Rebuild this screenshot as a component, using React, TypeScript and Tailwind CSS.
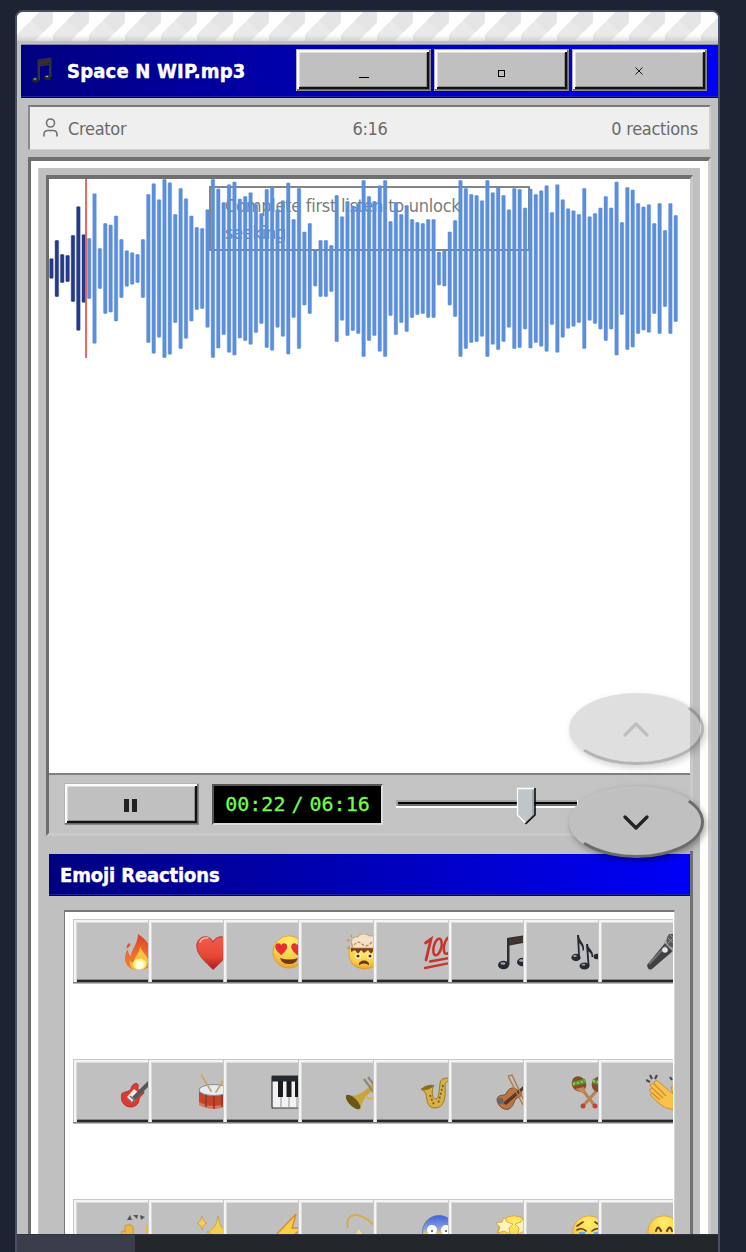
import React from "react";

const CENTER = 89.5;
const barHalf: number[] = [
  30, 85, 43, 40, 100, 186, 102, 91, 225, 61, 136, 131, 158, 88, 54, 48, 43, 88, 223, 255, 207, 268, 258, 163, 241, 210,
  158, 124, 121, 177, 268, 239, 199, 252, 260, 209, 217, 228, 193, 166, 238, 246, 177, 204, 257, 148, 241, 110, 136, 53,
  85, 85, 70, 220, 156, 202, 187, 196, 265, 217, 202, 249, 265, 142, 199, 163, 190, 148, 139, 136, 148, 148, 50, 53, 110,
  145, 265, 241, 223, 220, 204, 265, 228, 244, 220, 177, 241, 238, 182, 239, 223, 234, 249, 169, 252, 207, 180, 174, 163,
  241, 156, 166, 182, 217, 182, 260, 139, 244, 236, 196, 185, 192, 136, 196, 115, 196, 160,
];

function Waveform() {
  return (
    <svg width="640" height="180" viewBox="0 0 640 180" className="block">
      {barHalf.map((h, i) => (
        <g key={i}>
          <rect
            x={0.1 + i * 5.382}
            y={CENTER - h / 3}
            width={4.7}
            height={(h * 2) / 3}
            rx={1}
            fill={i < 7 ? "#253a86" : "#5b8edb"}
            opacity={0.35}
          />
          <rect
            x={0.7 + i * 5.382}
            y={CENTER - h / 3}
            width={3.5}
            height={(h * 2) / 3}
            rx={1}
            fill={i < 7 ? "#253a86" : "#5b8edb"}
          />
        </g>
      ))}
      <rect x="36.1" y="0" width="1.8" height="179" fill="#ea5a4f" />
    </svg>
  );
}

const Face = ({ children }: { children?: React.ReactNode }) => (
  <>
    <circle cx="18" cy="18" r="16.2" fill="url(#face)" stroke="#d9962a" strokeWidth=".7" />
    {children}
  </>
);
const heart = "M18 33C12 27 3 20 3 11.500C3 6 7 3 11 3C14 3 17 5 18 8C19 5 22 3 25 3C29 3 33 6 33 11.500C33 20 24 27 18 33Z";

const emojis: { name: string; art: React.ReactNode }[] = [
  {
    name: "fire",
    art: (
      <>
        <path d="M17 0C23 4 29 9 31 20C33 31 27 36 18 36C9 36 3.500 31 4 23C4.500 20 5 18 7 15.500C7 19 8 21 10 22C10 16 17 10 17 0Z" fill="url(#fire)" />
        <path d="M8 9C10 10 10 12 5.500 14.500C5.500 12 6 11 8 9Z" fill="#e2502d" />
        <path d="M19 12C21 19 28 22 27 29C26 34 22 36 18 36C11 36 8 32 9 26C10 29 12 29 13 28C13 23 19 19 19 12Z" fill="#fbc23f" />
        <ellipse cx="18.500" cy="30" rx="6.500" ry="5.500" fill="#fff58f" />
        <ellipse cx="18.500" cy="31" rx="4" ry="4" fill="#fffde0" />
      </>
    ),
  },
  {
    name: "heart",
    art: (
      <>
        <path d={heart} transform="translate(-2.5 -.5) scale(1.09)" fill="url(#heart)" stroke="#ad251f" strokeWidth=".7" />
        <path d="M4 8C5 5 8 3.500 12 4" stroke="#ffb0a5" strokeWidth="1.500" fill="none" strokeLinecap="round" />
      </>
    ),
  },
  {
    name: "heart eyes",
    art: (
      <Face>
        <path d={heart} transform="translate(3 8) scale(.4)" fill="#e43232" />
        <path d={heart} transform="translate(19 8) scale(.4)" fill="#e43232" />
        <path d="M9 24Q18 27 27 24Q25 30 18 30Q11 30 9 24Z" fill="#6b3a14" />
      </Face>
    ),
  },
  {
    name: "mind blown",
    art: (
      <>
        <path d="M3 15Q18 11 33 15Q35 35 18 35Q1 34 3 15Z" fill="url(#face)" stroke="#d9962a" strokeWidth=".7" />
        <path d="M5 14H31L32 17L28 16L25 20L22 16L18 19L15 16L12 20L9 16L5 18Z" fill="#833d20" />
        <path d="M6 10C4 6 8 2 12 3C14-1 20-1 23 2C28 1 33 5 31 10L29 14H7Z" fill="#f4e3c8" stroke="#b78b58" strokeWidth=".7" />
        <path d="M8 11Q12 6 16 10T25 9T30 11" stroke="#b98855" strokeWidth="1.300" fill="none" strokeDasharray="3 1.500" />
        <path d="M0 6L4 5L3 8ZM0 14L4 12L4 16ZM4 2L6 0L6 4Z" fill="#d99b34" />
        <circle cx="12" cy="22" r="2.800" fill="#fff8da" /><circle cx="24" cy="22" r="2.800" fill="#fff8da" />
        <circle cx="12" cy="22" r="1.600" fill="#5b3014" /><circle cx="24" cy="22" r="1.600" fill="#5b3014" />
        <path d="M13 31C12 25 24 25 23 31Q18 28 13 31Z" fill="#6b3a14" />
      </>
    ),
  },
  {
    name: "hundred",
    art: (
      <g fill="none" stroke="#c6352c" strokeLinecap="round">
        <path d="M4.500 9L10 5L5 26" strokeWidth="2.800" />
        <ellipse cx="16.500" cy="13" rx="3.800" ry="8.500" strokeWidth="2.500" transform="rotate(14 16.500 13)" />
        <ellipse cx="27" cy="11.500" rx="3.800" ry="8.500" strokeWidth="2.500" transform="rotate(14 27 11.500)" />
        <path d="M9 27.500L31 23.500M4 34L31 28.500" strokeWidth="2.300" />
      </g>
    ),
  },
  {
    name: "beamed notes",
    art: (
      <g>
        <path d="M11 4L33 .5V27H30.500V8.500L13.500 11.500V31H11Z" fill="#2f2e33" />
        <path d="M13 5L31 2V7L13 10Z" fill="#473331" />
        <ellipse cx="7.500" cy="31" rx="5.500" ry="4.300" fill="#25292f" /><ellipse cx="26.500" cy="28" rx="5.500" ry="4.300" fill="#25292f" />
        <ellipse cx="7" cy="29.500" rx="2.500" ry="1.200" fill="#9fa6b0" /><ellipse cx="25.500" cy="26.500" rx="2.500" ry="1.200" fill="#9fa6b0" />
      </g>
    ),
  },
  {
    name: "notes",
    art: (
      <g fill="#252a32">
        <path d="M6 1L8 1C8 7 14 9 13 16L11.500 17C12 12 9 10 8.300 9L9 24H7.300Z" />
        <ellipse cx="5" cy="23.500" rx="4.600" ry="3.700" />
        <path d="M15 10L17 10C17 15 23 16 22 23L20.500 23C21 19 18 18 17.500 17.500L18.500 32H16.700Z" />
        <ellipse cx="13.500" cy="32" rx="5" ry="3.500" />
        <path d="M27 6L29 6C29 11 34 13 33 19L31 19L29 14V23H28Z" /><ellipse cx="26" cy="22.500" rx="3.500" ry="2.700" />
        <ellipse cx="4" cy="22" rx="1.800" ry=".9" fill="#9ba6b5" /><ellipse cx="12.500" cy="30.700" rx="1.800" ry=".9" fill="#9ba6b5" />
      </g>
    ),
  },
  {
    name: "microphone",
    art: (
      <g>
        <path d="M1 31L19 9L27 17L6 35Q2 37 1 31Z" fill="#414144" />
        <path d="M3 30L20 12" stroke="#727276" strokeWidth="2" />
        <path d="M18 8L23 3L33 12L27 18Z" fill="#a2a2a5" />
        <circle cx="28" cy="6" r="7.500" fill="#57585c" />
        <path d="M22 4L31 12M24 1L34 9M22 9L32 0" stroke="#9a9b9e" />
        <circle cx="19" cy="16" r="2.800" fill="#e4e4e4" />
      </g>
    ),
  },
  {
    name: "guitar",
    art: (
      <g>
        <path d="M0 22C0 17 7 19 10 15C11 8 19 8 17 13C16 18 22 15 23 18C23 21 19 21 18 26C17 36 0 36 0 22Z" fill="#dc3a32" stroke="#a71f22" strokeWidth=".7" />
        <path d="M6 23L13 15L18 19L11 28Z" fill="#f2efea" />
        <path d="M11 23L32 2L35 5L14 26Z" fill="#57585b" />
        <path d="M7 25L11 29M9 22L14 27" stroke="#777" strokeWidth="1.500" />
      </g>
    ),
  },
  {
    name: "drum",
    art: (
      <g>
        <path d="M3 14V30Q18 38 33 30V14Z" fill="#c84329" />
        <path d="M3 28Q18 36 33 28V31Q18 39 3 31Z" fill="#e0715a" />
        <path d="M10 19V33M18 20V35M26 19V33" stroke="#7c3a34" strokeWidth="1.400" />
        <ellipse cx="18" cy="16" rx="15" ry="5.500" fill="#e6edf1" stroke="#7c8b94" />
        <path d="M6 2L15 17M29 4L20 18" stroke="#c9a566" strokeWidth="1.800" strokeLinecap="round" />
        <circle cx="6" cy="2" r="1.700" fill="#d3b071" />
      </g>
    ),
  },
  {
    name: "piano",
    art: (
      <g>
        <rect x="1" y="2" width="34" height="32" rx="1" fill="#f2f2f3" stroke="#33363a" strokeWidth="1.200" />
        <rect x="1" y="2" width="34" height="5.500" fill="#24292e" />
        <path d="M10 7V34M18 7V34M26 7V34" stroke="#929497" />
        <path d="M7 7H12V23H7ZM15.500 7H20.500V23H15.500ZM24 7H29V23H24Z" fill="#191b1e" />
      </g>
    ),
  },
  {
    name: "trumpet",
    art: (
      <g>
        <path d="M0 21C8 23 14 21 22 14L34 2L36 5L26 17C19 22 15 29 15 35C7 35 0 29 0 21Z" fill="#c7a53a" />
        <ellipse cx="7" cy="28" rx="4" ry="9.500" transform="rotate(-45 7 28)" fill="#6b5519" />
        <path d="M18 5L31 23M22 3L34 19" stroke="#8f8a73" strokeWidth="2.200" />
        <path d="M19 22C26 29 34 20 28 13" fill="none" stroke="#d3b54b" strokeWidth="2" />
      </g>
    ),
  },
  {
    name: "saxophone",
    art: (
      <g>
        <path d="M0 15L13 11C10 17 11 25 15 25C18 25 18 16 19 10C19 4 24 4 31 4V6C26 7 24 8 24 12C25 24 23 34 14 34C4 34 7 23 4 18Z" fill="#d8b044" stroke="#8b6b1c" strokeWidth=".8" />
        <ellipse cx="6.500" cy="13.500" rx="6" ry="2" transform="rotate(-18 6.500 13.500)" fill="#8d6d20" />
        <path d="M22 11L17 30M9 21L13 31" stroke="#76601f" strokeWidth="1.800" strokeDasharray="2 2" />
      </g>
    ),
  },
  {
    name: "violin",
    art: (
      <g>
        <path d="M1 25C2 20 8 22 10 20C12 14 18 12 21 16C27 16 27 23 21 24C18 26 18 32 13 35C7 37 1 31 1 25Z" fill="#bc7340" stroke="#6d3b1f" strokeWidth=".8" />
        <path d="M7 29L32 8L34 10L10 31Z" fill="#55392a" />
        <path d="M12 2L27 31M12 2L16 1L29 29" fill="none" stroke="#b67a46" strokeWidth="1.400" />
        <circle cx="4.500" cy="27" r="3" fill="#666" />
      </g>
    ),
  },
  {
    name: "maracas",
    art: (
      <g>
        <path d="M10 14L24 32M28 14L12 32" stroke="#b98252" strokeWidth="3" />
        <ellipse cx="8" cy="10" rx="7" ry="8" transform="rotate(-30 8 10)" fill="#8a4a27" />
        <path d="M4 15L13 13L15 18L11 19Z" fill="#c08a58" />
        <ellipse cx="28" cy="10" rx="7" ry="8" transform="rotate(30 28 10)" fill="#8a4a27" />
        <path d="M1.500 10L14.500 7M21.500 7L34 10" stroke="#4f9a35" strokeWidth="4.500" />
        <path d="M2 10L14 7M22 7L34 10" stroke="#e7c64b" strokeWidth="1.300" strokeDasharray="2 2" />
        <circle cx="12" cy="32" r="2.500" fill="#c14431" /><circle cx="24" cy="32" r="2.500" fill="#c14431" />
      </g>
    ),
  },
  {
    name: "clap",
    art: (
      <g>
        <path d="M3 16L6 14L4 11Q6 8 9 11L8 8Q11 5 14 9L27 20L25 13Q28 11 30 15L35 27Q35 37 25 35Q19 35 14 30L5 22Q3 20 6 19Z" fill="#f8c34d" stroke="#c78325" strokeWidth=".8" />
        <path d="M6 14L17 24M9 11L20 22M6 19L14 26" stroke="#cf8c2a" strokeWidth="1.200" />
        <path d="M0 6L4 8M4 1L6 5M11 1L9 5M24 3L26 6M30 1L28 6" stroke="#4c4c4c" strokeWidth="2.200" />
      </g>
    ),
  },
  {
    name: "raised hands",
    art: (
      <g>
        <path d="M0 18Q2 15 4 18V12Q6 9 7 12Q9 8 10 12Q13 11 12 16V22L15 20V36H3Z" fill="#eeb743" stroke="#bd8525" strokeWidth=".7" />
        <path d="M35 18Q33 15 31 18V12Q29 9 28 12Q26 8 25 12V36H32Z" fill="#eeb743" />
        <path d="M6 6L9 1L11 6ZM12 1L17 1L16 5ZM19 1L24 3L20 6Z" fill="#555" />
      </g>
    ),
  },
  {
    name: "sparkles",
    art: (
      <path d="M6 2Q7 8 11 9Q7 10 6 16Q5 10 1 9Q5 8 6 2ZM22 2Q24 16 33 18Q24 20 22 35Q20 20 11 18Q20 16 22 2Z" fill="#f5cf54" stroke="#d29b38" strokeWidth=".8" />
    ),
  },
  { name: "lightning", art: <path d="M25 0L5 21H15L6 36L31 14H21Z" fill="#fbcf4c" stroke="#dd8c27" strokeWidth="1.500" /> },
  {
    name: "dizzy",
    art: (
      <>
        <path d="M2 14C-2-4 17-3 31 15" fill="none" stroke="#d7ab4d" strokeWidth="2" />
        <path d="M13 15L16 20L22 20L18 25L20 33L13 29L6 33L8 25L4 20L10 20Z" fill="#f8dd85" />
      </>
    ),
  },
  {
    name: "scream",
    art: (
      <>
        <circle cx="18" cy="18" r="16.500" fill="url(#scream)" stroke="#4765bd" strokeWidth=".7" />
        <circle cx="11" cy="16" r="5" fill="#fff" /><circle cx="25" cy="16" r="5" fill="#fff" />
        <circle cx="11" cy="17" r="1" fill="#444" /><circle cx="25" cy="17" r="1" fill="#444" />
        <ellipse cx="18" cy="27" rx="4" ry="6" fill="#5b3014" />
      </>
    ),
  },
  {
    name: "star struck",
    art: (
      <Face>
        <path d="M8 3L11 8L17 10L13 14L14 20L8 17L2 19L4 13L0 9L6 8Z" fill="#fff3b8" stroke="#cf9332" strokeWidth=".7" />
        <path d="M28 3L30 8L36 9L32 14L33 20L28 17L22 20L23 14L19 10L25 8Z" fill="#fff3b8" stroke="#cf9332" strokeWidth=".7" />
        <path d="M10 24H27Q24 31 18 31Q12 31 10 24Z" fill="#5b3014" />
      </Face>
    ),
  },
  {
    name: "crying",
    art: (
      <Face>
        <path d="M6 12L12 8M24 8L30 12M6 16Q11 13 15 17M21 17Q26 13 30 16" fill="none" stroke="#67401b" strokeWidth="1.600" strokeLinecap="round" />
        <path d="M8 18H14V30H8ZM23 18H29V30H23Z" fill="#65a9ef" />
        <path d="M13 26Q18 20 23 26V31H13Z" fill="#6b3a14" />
      </Face>
    ),
  },
  {
    name: "smile",
    art: (
      <Face>
        <path d="M10 17Q12 10 15 17M21 17Q24 10 26 17" fill="none" stroke="#67401b" strokeWidth="2" strokeLinecap="round" />
        <path d="M9 23Q18 29 27 23" fill="none" stroke="#67401b" strokeWidth="2" />
      </Face>
    ),
  },
];

function Gradients() {
  return (
    <svg width="0" height="0" className="absolute">
      <defs>
        <radialGradient id="face" cx=".5" cy=".2" r=".9">
          <stop offset="0" stopColor="#fff06c" /><stop offset=".6" stopColor="#f8cb45" /><stop offset="1" stopColor="#e48f2b" />
        </radialGradient>
        <linearGradient id="fire" x2="0" y2="1">
          <stop offset="0" stopColor="#d94125" /><stop offset=".6" stopColor="#f0702f" /><stop offset="1" stopColor="#ef7c2c" />
        </linearGradient>
        <linearGradient id="heart" x2="0" y2="1">
          <stop offset="0" stopColor="#ef5c4c" /><stop offset=".6" stopColor="#e94734" /><stop offset="1" stopColor="#a51e25" />
        </linearGradient>
        <linearGradient id="scream" x2="0" y2="1">
          <stop offset="0" stopColor="#3f62db" /><stop offset=".4" stopColor="#8ba5e0" /><stop offset=".55" stopColor="#f4cd49" />
        </linearGradient>
      </defs>
    </svg>
  );
}

function BevelButton({ label, children }: { label: string; children: React.ReactNode }) {
  return (
    <button
      aria-label={label}
      className="flex h-[42px] w-[135px] shrink-0 items-center justify-center bg-[#c0c0c0] shadow-[inset_1px_1px_#b4b4b8,inset_-1px_-1px_#888,inset_-2px_-2px_#666,inset_3px_3px_#fbfbfb,inset_-4px_-4px_#111,inset_4px_4px_#dcdcdc,inset_-5px_-5px_#929292]"
    >
      {children}
    </button>
  );
}

function OvalButton({ up }: { up?: boolean }) {
  return (
    <button
      className={
        "flex h-[72px] w-[135px] items-center justify-center rounded-[50%] border-[3px] border-t-[#c1c1c1] border-l-[#c1c1c1] border-r-[#6b6b6b] border-b-[#6b6b6b] bg-[#c0c0c0] shadow-[2px_3px_6px_rgba(0,0,0,0.35)] " +
        (up ? "opacity-50" : "")
      }
    >
      <svg width="28" height="18" viewBox="0 0 28 18" fill="none" stroke={up ? "#808080" : "#222"} strokeWidth="3.300" strokeLinecap="round" strokeLinejoin="round" className="-ml-px">
        <path d={up ? "M3 15L14 4L25 15" : "M3 4L14 15L25 4"} />
      </svg>
    </button>
  );
}

export default function App() {
  return (
    <div className="relative h-[1252px] w-[746px] overflow-hidden bg-[#1e2333] pt-[10px] pl-[15px] font-['DejaVu_Sans_Condensed','DejaVu_Sans',sans-serif] [font-stretch:condensed]">
      <Gradients />
      <div className="flex h-[1242px] w-[705px] flex-col overflow-hidden rounded-t-lg border-x-2 border-t-2 border-[#4a5064] bg-[#c0c0c0]">
        <svg width="701" height="29" className="block shrink-0">
          <defs>
            <pattern id="stripes" width="36" height="29" patternUnits="userSpaceOnUse">
              <rect width="36" height="29" fill="#fff" />
              <path d="M22.500 0H36V10.500L17.500 29H0V22.500Z" fill="#e9e9e9" />
              <path d="M14 8.500L26.500 20L36 10.500V0H22.500ZM0 22.500L7 29H0Z" fill="#e5e5e5" />
            </pattern>
            <linearGradient id="stripEdge" x2="0" y2="1">
              <stop offset=".8" stopColor="#bbb" stopOpacity="0" /><stop offset="1" stopColor="#bbb" stopOpacity=".5" />
            </linearGradient>
          </defs>
          <rect width="701" height="29" fill="url(#stripes)" />
          <rect width="701" height="29" fill="url(#stripEdge)" />
        </svg>

        <header className="mt-[3px] ml-1 flex h-[54px] shrink-0 items-start border-t border-[#8585ad] bg-linear-to-r from-[#000080] to-[#0000f8] pl-[10px] shadow-[inset_0_-1px_#00006a,inset_0_-2px_#2222a0]">
          <svg width="22" height="27" viewBox="0 0 22 27" className="mt-[12px] shrink-0">
            <path d="M7 3L20 1V20H18.500V7.500L8.500 9V23H7Z" fill="#24242b" stroke="#55555c" strokeWidth=".5" />
            <path d="M8 4L19 2V6L8 8Z" fill="#3c2d2d" />
            <ellipse cx="4.500" cy="23" rx="3.500" ry="2.700" fill="#20242a" /><ellipse cx="16.500" cy="20.500" rx="3.500" ry="2.700" fill="#20242a" />
            <ellipse cx="4" cy="22" rx="1.500" ry=".8" fill="#a7adb9" /><ellipse cx="16" cy="19.500" rx="1.500" ry=".8" fill="#a7adb9" />
          </svg>
          <h1 className="mt-[13px] ml-[14px] w-[229px] shrink-0 text-[20px] leading-[26px] font-bold tracking-[0.2px] whitespace-nowrap text-white [-webkit-text-stroke:0.4px_white]">Space N WIP.mp3</h1>
          <div className="mt-1 flex gap-[3px]">
            <BevelButton label="Minimize">
              <span className="mt-[14px] block h-px w-[10px] bg-black" />
            </BevelButton>
            <BevelButton label="Maximize">
              <span className="mt-[6px] block h-[7px] w-[7px] border border-black" />
            </BevelButton>
            <BevelButton label="Close">
              <svg width="8" height="8" viewBox="0 0 8 8" className="mt-[2px] -ml-[2px]"><path d="M.5 .5L7.500 7.500M7.500 .5L.5 7.500" stroke="#000" strokeWidth=".9" /></svg>
            </BevelButton>
          </div>
        </header>

        <div className="mt-[7px] ml-[11px] flex h-[45px] w-[683px] shrink-0 items-center justify-between border-t-2 border-r-2 border-b border-l-2 border-t-[#7a7a7a] border-r-[#d0d0d0] border-b-[#d0d0d0] border-l-[#8a8a8a] bg-[#efefef] pr-[11px] pl-[12px] text-[18px] tracking-[-0.3px] text-[#6a6a6a]">
          <span className="flex w-[116px] items-center gap-[9px]">
            <svg width="17" height="20" viewBox="0 0 17 20" fill="none" stroke="#707070" strokeWidth="1.600" strokeLinecap="round"><circle cx="8.500" cy="5" r="4" /><path d="M2 18V16.500Q2 12.500 6 12.500H11Q15 12.500 15 16.500V18" /></svg>
            Creator
          </span>
          <span>6:16</span>
          <span className="w-[116px] text-right">0 reactions</span>
        </div>

        <div className="mt-[7px] ml-[11px] flex min-h-0 w-[683px] grow flex-col overflow-hidden border-t-4 border-r-[3px] border-l-[3px] border-t-[#707070] border-r-[#cdcdcd] border-l-[#6d6d6d] bg-white px-[7px] pt-[7px]">
          <div className="flex w-[662px] grow flex-col bg-[#c0c0c0] pt-[7px] pl-[8px] shadow-[inset_1px_0_#d0d0d0]">
            <section className="flex h-[661px] w-[647px] shrink-0 flex-col border-[3px] border-t-[4px] border-t-[#707070] border-r-[#cacaca] border-b-[#cacaca] border-l-[#6d6d6d]">
              <div className="relative h-[594px] w-[641px] shrink-0 bg-white">
                <div className="absolute top-[7px] left-[160px] h-[65px] w-[321px] border-2 border-[#858585] px-[14px] pt-[4px] text-[18px] leading-[27px] tracking-[-0.27px] text-[#7c7c7c]">
                  Complete first listen to unlock<br />seeking
                </div>
                <div className="relative"><Waveform /></div>
              </div>
              <div className="flex h-[60px] items-start border-t-2 border-t-[#808080] bg-[#c3c3c3] pt-[8px] pl-[15px]">
                <BevelButton label="Pause">
                  <svg width="14" height="13" className="mt-[2px] -ml-[2px]"><path d="M0 0H5V13H0ZM8 0H13V13H8Z" fill="#222" /></svg>
                </BevelButton>
                <div className="mt-px ml-[13px] flex h-[41px] w-[171px] shrink-0 items-center justify-center gap-[6px] border-2 border-t-[#555] border-r-[#ddd] border-b-[#ddd] border-l-[#555] bg-black pb-[2px] font-['DejaVu_Sans_Mono',monospace] text-[20px] text-[#75fb4c] [-webkit-text-stroke:0.3px_#75fb4c] [font-stretch:normal]">
                  <span>00:22</span><span>/</span><span>06:16</span>
                </div>
                <svg width="184" height="42" className="ml-[13px] shrink-0">
                  <rect x="0" y="17" width="182" height="8" fill="#fff" />
                  <rect x="0" y="17" width="181" height="6" fill="#a5a5a5" />
                  <rect x="2" y="19" width="179" height="2" fill="#000" />
                  <rect x="2" y="21" width="179" height="2" fill="#707070" />
                  <path d="M121 5H138V32L129.500 40L121 32Z" fill="#bfc5c8" />
                  <path d="M139 5V32L129.500 41" fill="none" stroke="#000" strokeWidth="1.500" />
                  <path d="M138 5.500H121.500V32L129 39.500" fill="none" stroke="#fff" strokeWidth="1.300" />
                  <path d="M137 6.500V32L130 39" fill="none" stroke="#888" />
                </svg>
              </div>
            </section>

            <section className="mt-[15px] ml-[3px] flex w-[644px] grow flex-col border-r-[3px] border-[#707070]">
              <h2 className="mt-[3px] h-[42px] w-[641px] shrink-0 bg-linear-to-r from-[#000080] to-[#0000f8] pl-[11px] text-[20px] leading-[42px] font-bold tracking-[-0.13px] text-white shadow-[inset_0_-1px_#00006a,inset_0_-2px_#2222a0] [-webkit-text-stroke:0.4px_white]">
                Emoji Reactions
              </h2>
              <div className="mt-[14px] ml-[15px] w-[611px] grow overflow-hidden border-t-2 border-r border-l border-t-[#777] border-r-[#d6d6d6] border-l-[#777] bg-white pt-[7px] pl-[8px]">
                <div className="grid w-[600px] grid-cols-8 gap-y-[75px]">
                  {emojis.map((e) => (
                    <button
                      key={e.name}
                      aria-label={e.name}
                      className="flex h-[65px] w-[75px] items-center overflow-hidden bg-[#c0c0c0] pl-[48px] shadow-[inset_0_-1px_#b8b8b8,inset_0_-2px_#808080,inset_1px_1px_#c8c8c8,inset_3px_3px_#f4f4f4,inset_4px_4px_#dadada,inset_0_-4px_#282828,inset_0_-5px_#888]"
                    >
                      <span className="block w-[27px] overflow-hidden pr-px">
                        <svg width="36" height="36" viewBox="0 0 36 36" className="block max-w-none">
                          {e.art}
                        </svg>
                      </span>
                    </button>
                  ))}
                </div>
              </div>
            </section>
          </div>
        </div>
      </div>

      <div className="absolute top-[693px] left-[569px] flex flex-col gap-[21px]">
        <OvalButton up />
        <OvalButton />
      </div>
      <div className="absolute top-[1234px] left-[17px] h-[18px] w-[701px] border-t border-[#30343c] bg-[#23272c]">
        <div className="h-full w-[118px] bg-[#3a3e4a]" />
      </div>
    </div>
  );
}
